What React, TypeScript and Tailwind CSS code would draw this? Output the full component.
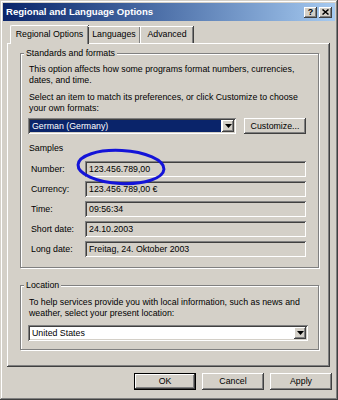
import React from 'react';

const raised =
  'shadow-[inset_-1px_-1px_#404040,inset_1px_1px_#ffffff,inset_-2px_-2px_#808080,inset_2px_2px_#d4d0c8]';
const sunken =
  'shadow-[inset_1px_1px_#808080,inset_-1px_-1px_#ffffff,inset_2px_2px_#404040,inset_-2px_-2px_#d4d0c8]';

const samples = [
  { label: 'Number:', value: '123.456.789,00' },
  { label: 'Currency:', value: '123.456.789,00 €' },
  { label: 'Time:', value: '09:56:34' },
  { label: 'Short date:', value: '24.10.2003' },
  { label: 'Long date:', value: 'Freitag, 24. Oktober 2003' },
];

function Arrow() {
  return (
    <svg width="7" height="4" viewBox="0 0 7 4">
      <path d="M0 0h7L3.5 4z" fill="#000" />
    </svg>
  );
}

function Group({ title, children, className = '' }: { title: string; children: React.ReactNode; className?: string }) {
  return (
    <fieldset className={`border border-[#808080] shadow-[inset_1px_1px_#ffffff,1px_1px_#ffffff] ${className}`}>
      <legend className="ml-[3px] px-[2px] bg-[#d4d0c8] leading-[11px]">{title}</legend>
      {children}
    </fieldset>
  );
}

export default function App() {
  return (
    <div className="relative w-[338px] h-[400px] bg-[#d4d0c8] p-[3px] text-[8.8px] text-black font-['Liberation_Sans',Arial,sans-serif] shadow-[inset_-1px_-1px_#404040,inset_1px_1px_#d4d0c8,inset_-2px_-2px_#808080,inset_2px_2px_#ffffff]">
      {/* Title bar */}
      <div className="h-[18px] flex items-center justify-between bg-gradient-to-r from-[#0a246a] to-[#a6caf0] pl-[3px] pr-[3px]">
        <span className="text-white font-bold text-[9.6px] leading-[12px]">Regional and Language Options</span>
        <div className="flex gap-[2px]">
          <div className={`w-[13px] h-[11px] bg-[#d4d0c8] flex items-center justify-center font-bold text-[9px] leading-none ${raised}`}>?</div>
          <div className={`w-[13px] h-[11px] bg-[#d4d0c8] flex items-center justify-center ${raised}`}>
            <svg width="7" height="6" viewBox="0 0 7 6">
              <path d="M0.5 0.5l6 5M6.5 0.5l-6 5" stroke="#000" strokeWidth="1.5" />
            </svg>
          </div>
        </div>
      </div>

      {/* Tabs */}
      <div className="relative z-10 flex items-end h-[19px] mt-[3px] ml-[7px]">
        <div className="w-[78px] h-[19px] -mb-[1px] bg-[#d4d0c8] border-l border-t border-white rounded-tl-[2px] shadow-[inset_-1px_0_#808080,1px_0_#404040] flex items-center justify-center pb-[1px]">
          Regional Options
        </div>
        <div className="w-[52px] h-[17px] border-t border-white shadow-[inset_-1px_0_#808080,1px_0_#404040] flex items-center justify-center">
          Languages
        </div>
        <div className="w-[53px] h-[17px] border-t border-l border-white shadow-[inset_-1px_0_#808080,1px_0_#404040] flex items-center justify-center">
          Advanced
        </div>
      </div>

      {/* Tab page */}
      <div className="ml-[4px] mr-[5px] h-[324px] pt-[5px] pl-[13px] pr-[11px] shadow-[inset_-1px_-1px_#404040,inset_1px_1px_#ffffff,inset_-2px_-2px_#808080]">
        <Group title="Standards and formats">
          <div className="pl-[8px] pr-[8px] pt-[5px] pb-[10px] leading-[11px]">
            <p>This option affects how some programs format numbers, currencies,<br />dates, and time.</p>
            <p className="mt-[6px]">Select an item to match its preferences, or click Customize to choose<br />your own formats:</p>
            <div className="flex mt-[4px] -ml-[1px]">
              <div className={`w-[208px] h-[16px] bg-white flex p-[2px] ${sunken}`}>
                <div className="flex-1 bg-[#0a246a] text-white pl-[2px] leading-[12px]">German (Germany)</div>
                <div className={`w-[12px] ml-[1px] bg-[#d4d0c8] flex items-center justify-center ${raised}`}>
                  <Arrow />
                </div>
              </div>
              <div className={`ml-[8px] w-[62px] h-[16px] flex items-center justify-center ${raised}`}>Customize...</div>
            </div>
            <div className="mt-[9px]">Samples</div>
            <div className="mt-[7px] flex flex-col gap-[4px]">
              {samples.map((s) => (
                <div key={s.label} className="flex items-center pl-[2px]">
                  <span className="w-[54px]">{s.label}</span>
                  <div className={`w-[221px] h-[16px] pl-[4px] pt-[2px] leading-[12px] ${sunken}`}>{s.value}</div>
                </div>
              ))}
            </div>
          </div>
        </Group>

        <Group title="Location" className="mt-[12px]">
          <div className="pl-[8px] pr-[8px] pt-[6px] pb-[8px] leading-[11px]">
            <p>To help services provide you with local information, such as news and<br />weather, select your present location:</p>
            <div className={`mt-[6px] -ml-[1px] w-[280px] h-[16px] bg-white flex p-[2px] ${sunken}`}>
              <div className="flex-1 pl-[2px] leading-[12px]">United States</div>
              <div className={`w-[12px] bg-[#d4d0c8] flex items-center justify-center ${raised}`}>
                <Arrow />
              </div>
            </div>
          </div>
        </Group>
      </div>

      {/* Buttons */}
      <div className="flex justify-end gap-[6px] mt-[6px] pr-[3px]">
        <div className="w-[62px] h-[17px] border border-black">
          <div className={`h-full flex items-center justify-center ${raised}`}>OK</div>
        </div>
        <div className={`w-[62px] h-[17px] flex items-center justify-center ${raised}`}>Cancel</div>
        <div className={`w-[62px] h-[17px] flex items-center justify-center ${raised}`}>Apply</div>
      </div>

      {/* Hand-drawn highlight */}
      <svg className="absolute left-[75px] top-[148px]" width="92" height="38" viewBox="0 0 92 38">
        <ellipse cx="46" cy="19" rx="43" ry="16.5" fill="none" stroke="#1414d8" strokeWidth="3" transform="rotate(3 46 19)" />
      </svg>
    </div>
  );
}
